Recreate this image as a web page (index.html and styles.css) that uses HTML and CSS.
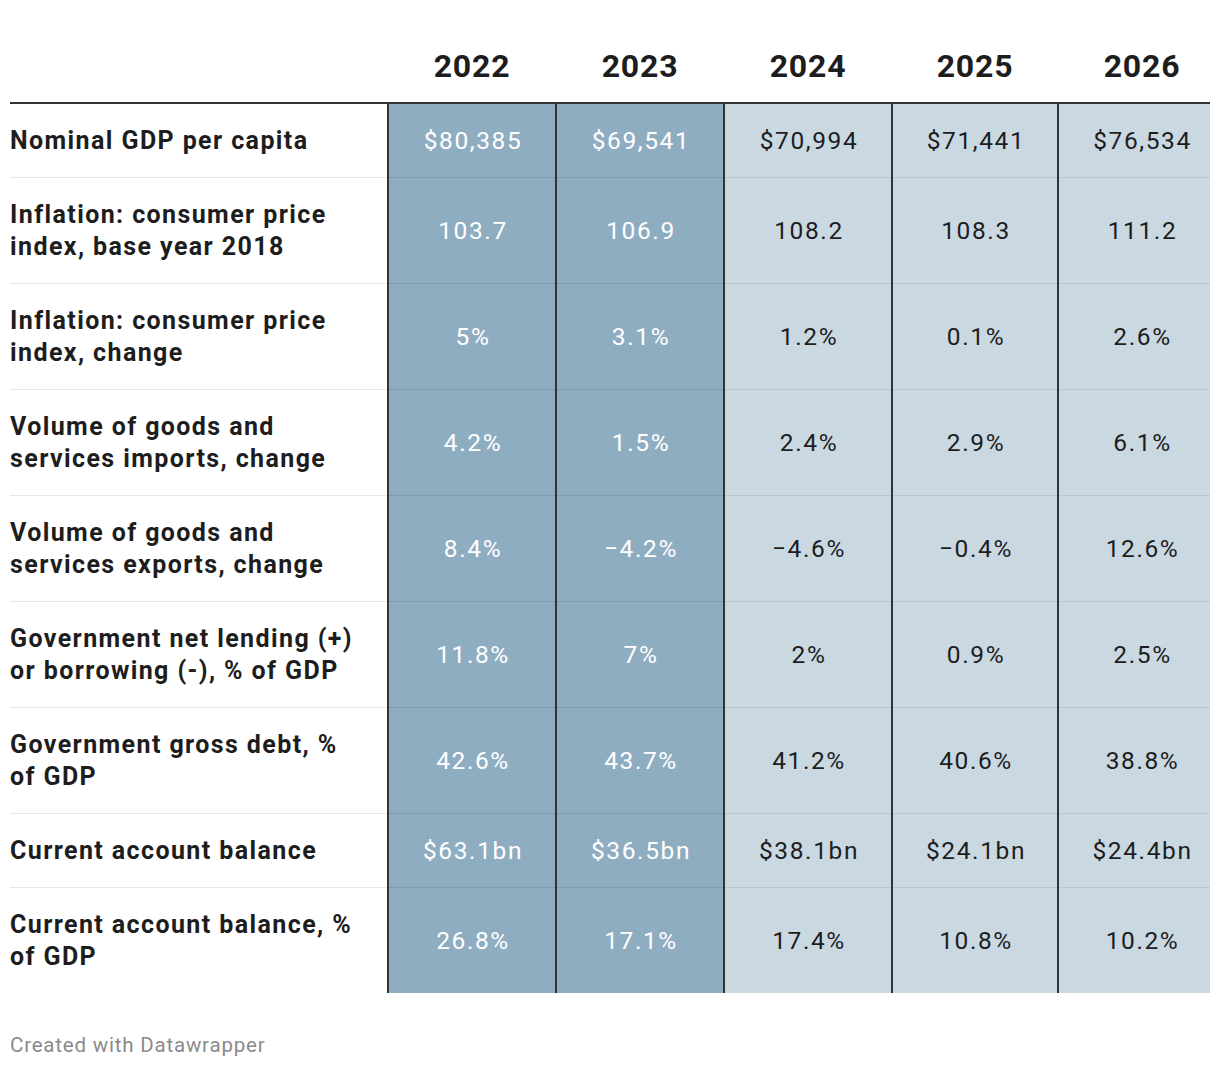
FILE: index.html
```html
<!DOCTYPE html>
<html lang="en">
<head>
<meta charset="utf-8">
<title>Economic indicators</title>
<link rel="stylesheet" href="styles.css">
</head>
<body>
<div class="wrap">
<table class="dw">
  <colgroup>
    <col class="c-label"><col class="c-v"><col class="c-v"><col class="c-v"><col class="c-v5"><col class="c-v6">
  </colgroup>
  <thead>
    <tr>
      <th class="lbl"></th>
      <th>2022</th><th>2023</th><th>2024</th><th>2025</th><th class="last">2026</th>
    </tr>
  </thead>
  <tbody>
    <tr><td class="lbl">Nominal GDP per capita</td><td class="dk">$80,385</td><td class="dk">$69,541</td><td class="lt">$70,994</td><td class="lt">$71,441</td><td class="lt last">$76,534</td></tr>
    <tr><td class="lbl">Inflation: consumer price index, base year 2018</td><td class="dk">103.7</td><td class="dk">106.9</td><td class="lt">108.2</td><td class="lt">108.3</td><td class="lt last">111.2</td></tr>
    <tr><td class="lbl">Inflation: consumer price index, change</td><td class="dk">5%</td><td class="dk">3.1%</td><td class="lt">1.2%</td><td class="lt">0.1%</td><td class="lt last">2.6%</td></tr>
    <tr><td class="lbl">Volume of goods and services imports, change</td><td class="dk">4.2%</td><td class="dk">1.5%</td><td class="lt">2.4%</td><td class="lt">2.9%</td><td class="lt last">6.1%</td></tr>
    <tr><td class="lbl">Volume of goods and services exports, change</td><td class="dk">8.4%</td><td class="dk">&minus;4.2%</td><td class="lt">&minus;4.6%</td><td class="lt">&minus;0.4%</td><td class="lt last">12.6%</td></tr>
    <tr><td class="lbl">Government net lending (+) or borrowing (-), % of GDP</td><td class="dk">11.8%</td><td class="dk">7%</td><td class="lt">2%</td><td class="lt">0.9%</td><td class="lt last">2.5%</td></tr>
    <tr><td class="lbl">Government gross debt, % of GDP</td><td class="dk">42.6%</td><td class="dk">43.7%</td><td class="lt">41.2%</td><td class="lt">40.6%</td><td class="lt last">38.8%</td></tr>
    <tr><td class="lbl">Current account balance</td><td class="dk">$63.1bn</td><td class="dk">$36.5bn</td><td class="lt">$38.1bn</td><td class="lt">$24.1bn</td><td class="lt last">$24.4bn</td></tr>
    <tr><td class="lbl">Current account balance, % of GDP</td><td class="dk">26.8%</td><td class="dk">17.1%</td><td class="lt">17.4%</td><td class="lt">10.8%</td><td class="lt last">10.2%</td></tr>
  </tbody>
</table>
<div class="credit">Created with Datawrapper</div>
</div>
</body>
</html>
```
FILE: styles.css
```css
html, body {
  margin: 0;
  padding: 0;
  background: #ffffff;
}

body {
  font-family: Roboto, "Liberation Sans", Arial, sans-serif;
  color: #1d1d1d;
}

.wrap {
  padding: 46px 10px 0 10px;
}

.dw {
  width: 1200px;
  border-collapse: collapse;
  table-layout: fixed;
}

.c-label { width: 378px; }
.c-v { width: 168px; }
.c-v5 { width: 166px; }
.c-v6 { width: 152px; }

.dw thead th {
  font-size: 32px;
  font-weight: 700;
  line-height: 40px;
  letter-spacing: 0.8px;
  padding: 0 0 16px 0;
  text-align: center;
  border-bottom: 2px solid #333333;
  color: #1d1d1d;
}

.dw th.last,
.dw td.last {
  padding-left: 16px;
  padding-right: 0;
}

.dw td {
  font-size: 24.5px;
  line-height: 32px;
  letter-spacing: 1.6px;
  padding: 21px 0 20px 2px;
  text-align: center;
  vertical-align: middle;
  border-bottom: 1px solid #e6e6e6;
}

.dw tbody tr:last-child td {
  border-bottom: none;
}

.dw td.lbl {
  text-align: left;
  font-size: 25px;
  font-weight: 700;
  letter-spacing: 1.4px;
  padding-left: 0;
  padding-right: 20px;
}

.dw td.dk {
  background: #8fadc1;
  color: #ffffff;
  border-left: 2px solid #333333;
  border-bottom-color: #7f9db1;
}

.dw td.lt {
  background: #cad8e2;
  color: #1d1d1d;
  border-left: 2px solid #333333;
  border-bottom-color: #b6c6d1;
}

.credit {
  margin-top: 40px;
  font-size: 20.5px;
  line-height: 24px;
  letter-spacing: 0.8px;
  color: #8a8a8a;
}
```
